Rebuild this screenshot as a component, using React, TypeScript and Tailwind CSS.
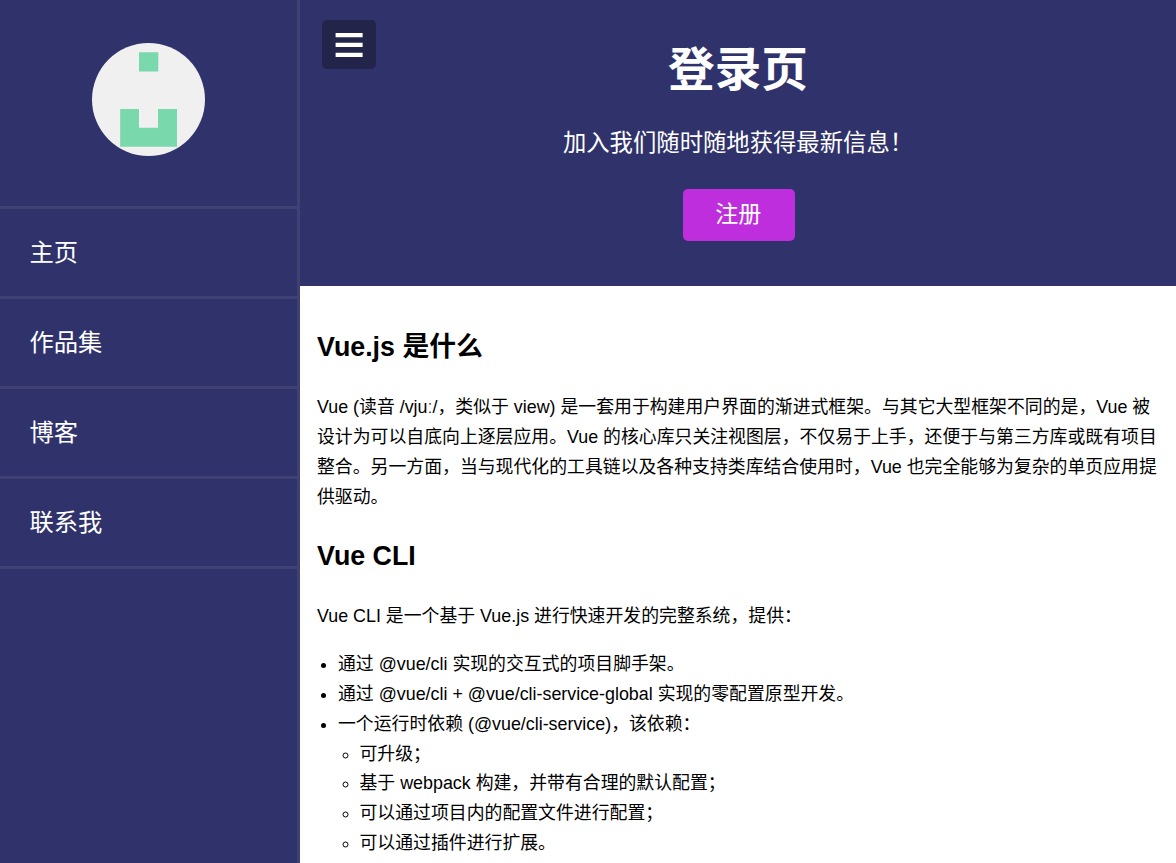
const navItems = ['主页', '作品集', '博客', '联系我'];

function Avatar() {
  return (
    <svg className="h-[113px] w-[113px] rounded-full bg-[#f0f0f0]" viewBox="0 0 113 113">
      <path
        fill="#79d8ac"
        d="M47 9.3h19.3v19.2H47zM28.2 66H47v18.8h19V66h19v37.8H28.2z"
      />
    </svg>
  );
}

function Sidebar() {
  return (
    <nav className="flex w-[300px] shrink-0 flex-col border-r-3 border-[#3f4173]">
      <div className="flex h-[209px] justify-center border-b-3 border-[#3f4173] pt-[43px]">
        <Avatar />
      </div>
      <ul>
        {navItems.map((item) => (
          <li key={item} className="h-[90px] border-b-3 border-[#3f4173]">
            <a href="#" className="flex h-full items-center pt-[2px] pl-[29.5px] text-[24.3px] text-white">
              {item}
            </a>
          </li>
        ))}
      </ul>
    </nav>
  );
}

function Header() {
  return (
    <header className="relative flex h-[285.6px] shrink-0 flex-col items-center bg-[#30336b] text-white">
      <button
        aria-label="Toggle navigation"
        className="absolute top-[20.4px] left-[22px] flex h-[49px] w-[54px] items-center justify-center rounded-[5px] bg-[#222449]"
      >
        <svg className="h-[26px] w-[28px]" viewBox="0 0 28 26" fill="#fff">
          <path d="M.6 1h27v4.3H.6zM.6 10.8h27v4.3H.6zM.6 20.7h27v4.3H.6z" />
        </svg>
      </button>
      <h1 className="mt-[40px] text-[46.6px] leading-[60px] font-bold">登录页</h1>
      <p className="mt-[28px] text-[23.35px] leading-[30px]">加入我们随时随地获得最新信息！</p>
      <button className="mt-[31px] ml-[1.5px] flex h-[52px] w-[112px] items-center justify-center rounded-[5px] bg-[#be2edd] pr-[1px] pb-[1px] text-[23.1px]">
        注册
      </button>
    </header>
  );
}

function Content() {
  return (
    <main className="flex-1 bg-white pt-[41px] pl-[17px] text-[17.88px] leading-[29.95px] whitespace-nowrap text-black">
      <h2 className="text-[26.8px] leading-[40px] font-bold">Vue.js 是什么</h2>
      <p className="mt-[25px] leading-[30px]">
        Vue (读音 /vjuː/，类似于 view) 是一套用于构建用户界面的渐进式框架。与其它大型框架不同的是，Vue 被
        <br />
        设计为可以自底向上逐层应用。Vue 的核心库只关注视图层，不仅易于上手，还便于与第三方库或既有项目
        <br />
        整合。另一方面，当与现代化的工具链以及各种支持类库结合使用时，Vue 也完全能够为复杂的单页应用提
        <br />
        供驱动。
      </p>
      <h2 className="mt-[24.5px] text-[26.8px] leading-[40px] font-bold">Vue CLI</h2>
      <p className="mt-[26px]">Vue CLI 是一个基于 Vue.js 进行快速开发的完整系统，提供：</p>
      <ul className="mt-[18px] list-disc pl-[21px] leading-[29.85px]">
        <li>通过 @vue/cli 实现的交互式的项目脚手架。</li>
        <li>通过 @vue/cli + @vue/cli-service-global 实现的零配置原型开发。</li>
        <li>
          一个运行时依赖 (@vue/cli-service)，该依赖：
          <ul className="list-[circle] pl-[21.5px]">
            <li>可升级；</li>
            <li>基于 webpack 构建，并带有合理的默认配置；</li>
            <li>可以通过项目内的配置文件进行配置；</li>
            <li>可以通过插件进行扩展。</li>
          </ul>
        </li>
      </ul>
    </main>
  );
}

export default function App() {
  return (
    <div
      lang="zh-CN"
      className="flex h-screen overflow-hidden bg-[#30336b] font-['Liberation_Sans','Noto_Sans_CJK_SC',sans-serif]"
    >
      <Sidebar />
      <div className="flex min-w-0 flex-1 flex-col">
        <Header />
        <Content />
      </div>
    </div>
  );
}
